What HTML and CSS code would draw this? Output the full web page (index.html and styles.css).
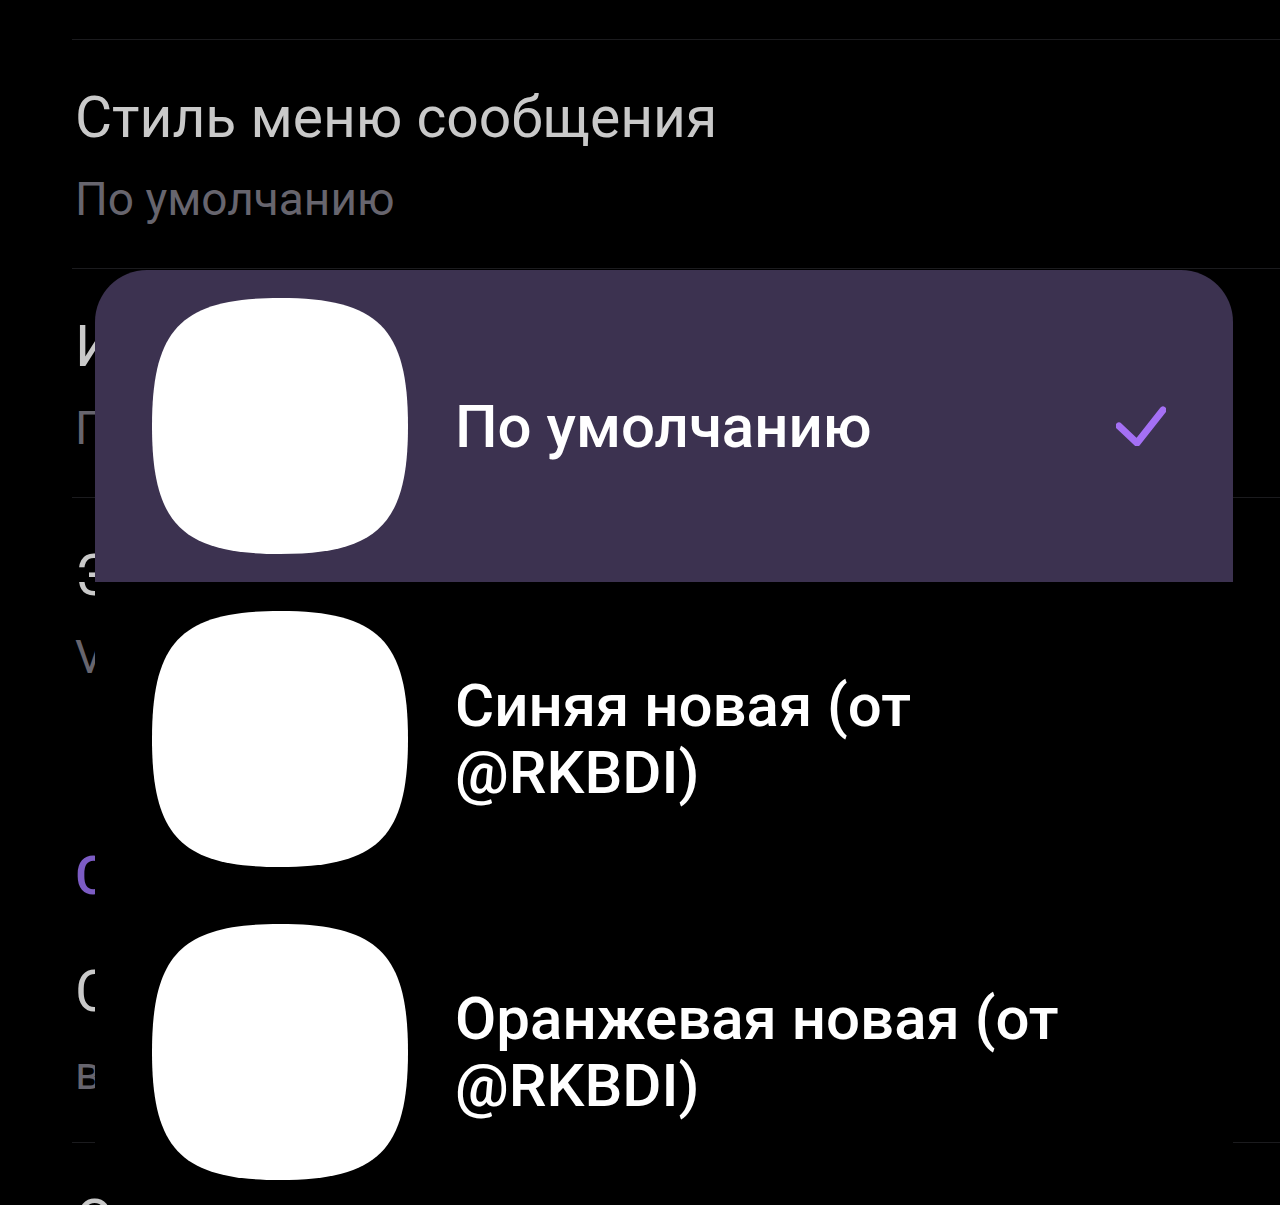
FILE: index.html
```html
<!DOCTYPE html>
<html lang="ru">
<head>
  <meta charset="UTF-8">
  <meta name="viewport" content="width=device-width, initial-scale=1.0">
  <title>Иконка приложения</title>
  <link rel="stylesheet" href="styles.css">
</head>
<body>

<div id="settings">
  <div class="row">
    <div class="row-title">Стиль меню сообщения</div>
    <div class="row-sub">По умолчанию</div>
  </div>
  <div class="row">
    <div class="row-title">Иконка</div>
    <div class="row-sub">По умолч.</div>
  </div>
  <div class="row">
    <div class="row-title">Эмодзи</div>
    <div class="row-sub">VK</div>
  </div>
  <div class="section-title">Сообщения</div>
  <div class="row no-line">
    <div class="row-title">Скругление</div>
    <div class="row-sub">выкл.</div>
  </div>
  <div class="row">
    <div class="row-title">Отправка</div>
    <div class="row-sub">По умолч.</div>
  </div>
</div>

<div id="icon-picker">
  <div class="option selected">
    <svg class="option-icon" viewBox="0 0 256 256"><path d="M0 128C0 30 30 0 128 0S256 30 256 128 226 256 128 256 0 226 0 128Z" fill="#fff"/></svg>
    <div class="option-label">По умолчанию</div>
    <svg class="check" viewBox="0 0 50 40"><path d="M3 20L21 37L47 4" fill="none" stroke="#a470f4" stroke-width="7" stroke-linecap="round" stroke-linejoin="round"/></svg>
  </div>
  <div class="option">
    <svg class="option-icon" viewBox="0 0 256 256"><path d="M0 128C0 30 30 0 128 0S256 30 256 128 226 256 128 256 0 226 0 128Z" fill="#fff"/></svg>
    <div class="option-label">Синяя новая (от @RKBDI)</div>
    <span class="check"></span>
  </div>
  <div class="option">
    <svg class="option-icon" viewBox="0 0 256 256"><path d="M0 128C0 30 30 0 128 0S256 30 256 128 226 256 128 256 0 226 0 128Z" fill="#fff"/></svg>
    <div class="option-label">Оранжевая новая (от @RKBDI)</div>
    <span class="check"></span>
  </div>
</div>

</body>
</html>
```

FILE: styles.css
```css
body {
  margin: 0;
  background-color: #000000;
  font-family: Roboto, "Noto Sans", sans-serif;
  overflow: hidden;
}

#settings {
  padding-top: 39px;
}

.row {
  margin-left: 72px;
  padding: 44px 0 41px 3px;
  border-top: 1px solid #1b1b1e;
}

.row.no-line {
  border-top: none;
}

.row-title {
  font-size: 57px;
  line-height: 68px;
  color: #c9c9c9;
  white-space: nowrap;
}

.row-sub {
  margin-top: 19px;
  font-size: 46px;
  line-height: 56px;
  color: #67656e;
  white-space: nowrap;
}

.section-title {
  margin-top: 118px;
  padding: 0 0 6px 75px;
  font-size: 54px;
  line-height: 64px;
  font-weight: 500;
  color: #7c5cc4;
}

#icon-picker {
  position: absolute;
  left: 95px;
  top: 270px;
  width: 1138px;
  height: 940px;
  background-color: #000000;
  border-radius: 52px;
  overflow: hidden;
}

.option {
  display: flex;
  align-items: center;
  height: 313px;
  padding: 0 67px 0 57px;
}

.option.selected {
  height: 312px;
  background-color: #3c3250;
}

.option-icon {
  flex: none;
  width: 256px;
  height: 256px;
}

.option-label {
  flex: 1;
  margin: 0 16px 0 47px;
  font-size: 60px;
  line-height: 67px;
  font-weight: 500;
  color: #ffffff;
}

.check {
  flex: none;
  width: 50px;
  height: 40px;
}
```
